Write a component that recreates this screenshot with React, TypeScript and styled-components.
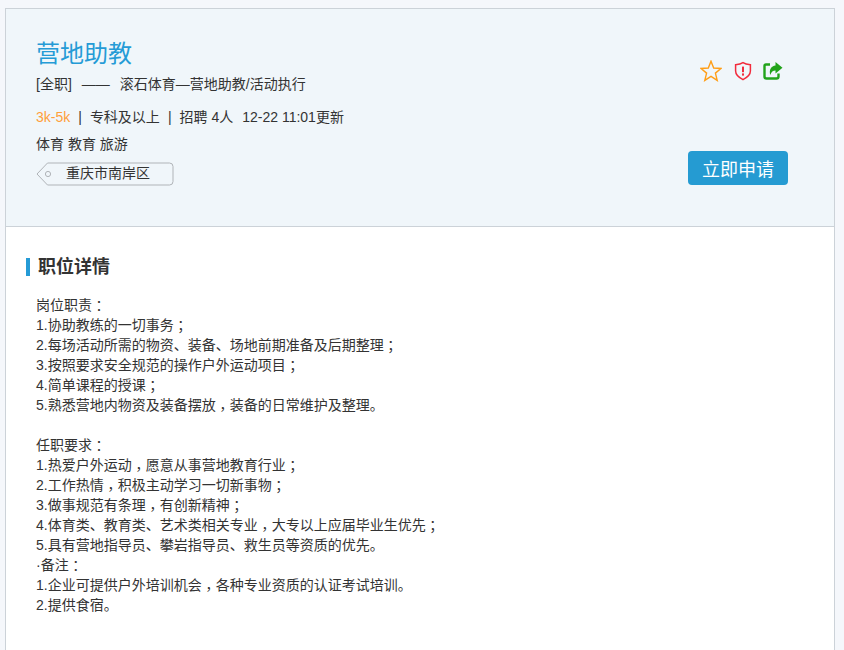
import React from 'react';
import styled, { createGlobalStyle } from 'styled-components';

const Global = createGlobalStyle`
  html, body { margin: 0; padding: 0; background: #f5f7fb; }
  body { font-family: "Liberation Sans", "Noto Sans CJK SC", sans-serif; font-size: 14px; color: #333; }
`;

const Page = styled.div`
  height: 650px;
  overflow: hidden;
  padding: 8px 9px 0 5px;
  box-sizing: border-box;
`;
const Card = styled.div`
  border: 1px solid #ccd2d8;
  border-bottom: none;
  background: #fff;
  height: 660px;
`;
const Header = styled.header`
  height: 217px;
  background: #f0f6fa;
  border-bottom: 1px solid #ccd2d8;
  display: flex;
  justify-content: space-between;
  padding: 0 46px 0 30px;
`;
const Info = styled.div`
  display: flex;
  flex-direction: column;
  padding-top: 28px;
`;
const Title = styled.h1`
  margin: 0;
  font-size: 24px;
  font-weight: 400;
  line-height: 34px;
  color: #259bd6;
`;
const Sub = styled.div`
  margin-top: 3px;
  line-height: 20px;
  white-space: pre;
`;
const Dash = styled.span`
  margin: 0 10px;
`;
const Meta = styled.div`
  margin-top: 13px;
  line-height: 20px;
  white-space: pre;
`;
const Salary = styled.span`
  color: #ff9f3a;
`;
const Divider = styled.span`
  margin: 0 8px;
`;
const Time = styled.span`
  margin-left: 9px;
`;
const Tags = styled.div`
  margin-top: 7px;
  line-height: 20px;
`;
const Location = styled.div`
  position: relative;
  margin-top: 8px;
  width: 138px;
  height: 24px;
  line-height: 22px;
  box-sizing: border-box;
  padding-left: 30px;
`;
const LocationShape = styled.svg`
  position: absolute;
  left: 0;
  top: 0;
`;
const LocationText = styled.span`
  position: relative;
`;
const Actions = styled.div`
  display: flex;
  flex-direction: column;
  align-items: flex-end;
  padding-top: 50px;
`;
const Icons = styled.div`
  display: flex;
  align-items: center;
  gap: 10px;
  margin-right: 5px;
  height: 24px;
`;
const StarIcon = styled.svg`
  margin-right: 1px;
`;
const ApplyButton = styled.button`
  margin-top: 68px;
  width: 100px;
  height: 34px;
  border: none;
  border-radius: 4px;
  background: #259bd2;
  color: #fff;
  font-family: inherit;
  font-size: 18px;
  padding: 0;
`;
const Body = styled.section`
  padding: 31px 30px 0 20px;
`;
const SectionTitle = styled.h2`
  margin: 0;
  border-left: 4px solid #259bd6;
  padding-left: 8px;
  height: 18px;
  font-size: 18px;
  font-weight: 700;
  line-height: 18px;
  color: #333;
`;
const Description = styled.div`
  margin-top: 19px;
  padding-left: 10px;
  line-height: 20px;
`;
const Line = styled.div`
  height: 20px;
  white-space: pre;
`;
const Punct = styled.span<{ $drop: number }>`
  font-family: "Noto Sans CJK TC", sans-serif;
  line-height: 0;
  vertical-align: ${(p) => -p.$drop}px;
`;

const lines = [
  '岗位职责：',
  '1.协助教练的一切事务；',
  '2.每场活动所需的物资、装备、场地前期准备及后期整理；',
  '3.按照要求安全规范的操作户外运动项目；',
  '4.简单课程的授课；',
  '5.熟悉营地内物资及装备摆放，装备的日常维护及整理。',
  '',
  '任职要求：',
  '1.热爱户外运动，愿意从事营地教育行业；',
  '2.工作热情，积极主动学习一切新事物；',
  '3.做事规范有条理，有创新精神；',
  '4.体育类、教育类、艺术类相关专业，大专以上应届毕业生优先；',
  '5.具有营地指导员、攀岩指导员、救生员等资质的优先。',
  '·备注：',
  '1.企业可提供户外培训机会，各种专业资质的认证考试培训。',
  '2.提供食宿。',
];

const renderLine = (text: string) =>
  text.split(/([，；：])/).map((part, i) =>
    i % 2 === 1 ? (
      <Punct key={i} $drop={part === '，' ? 4 : 1}>
        {part}
      </Punct>
    ) : (
      part
    ),
  );

export default function App() {
  return (
    <>
      <Global />
      <Page>
        <Card>
          <Header>
            <Info>
              <Title>营地助教</Title>
              <Sub>[全职]<Dash>——</Dash>滚石体育—营地助教/活动执行</Sub>
              <Meta>
                <Salary>3k-5k</Salary>
                <Divider>|</Divider>专科及以上<Divider>|</Divider>招聘 4人<Time>12-22 11:01更新</Time>
              </Meta>
              <Tags>体育 教育 旅游</Tags>
              <Location>
                <LocationShape width="138" height="24" viewBox="0 0 138 24">
                  <path d="M1 12 L11.5 1 H133.5 a3.5 3.5 0 0 1 3.5 3.5 V19.5 a3.5 3.5 0 0 1 -3.5 3.5 H11.5 Z" fill="none" stroke="#b0b4b8" strokeWidth="1" />
                  <circle cx="12" cy="12" r="2.6" fill="none" stroke="#b0b4b8" strokeWidth="1" />
                </LocationShape>
                <LocationText>重庆市南岸区</LocationText>
              </Location>
            </Info>
            <Actions>
              <Icons>
                <StarIcon width="22" height="22" viewBox="0 0 22 22">
                  <path d="M11 1.2 L13.7 8 L21 8.5 L15.4 13.1 L17.2 20.4 L11 16.4 L4.8 20.4 L6.6 13.1 L1 8.5 L8.3 8 Z" fill="none" stroke="#ff9e16" strokeWidth="1.4" strokeLinejoin="miter" />
                </StarIcon>
                <svg width="20" height="20" viewBox="0 0 20 20">
                  <path d="M10 1.6 C12 3 14.8 3.6 17.4 3.8 V10 C17.4 13.8 14 16.6 10 18.6 C6 16.6 2.6 13.8 2.6 10 V3.8 C5.2 3.6 8 3 10 1.6 Z" fill="none" stroke="#f22b3c" strokeWidth="1.5" />
                  <rect x="9" y="5.6" width="2" height="5.6" fill="#f22b3c" />
                  <rect x="9" y="12.4" width="2" height="2.2" fill="#f22b3c" />
                </svg>
                <svg width="20" height="20" viewBox="0 0 20 20">
                  <path d="M7 3.5 H3 a1.5 1.5 0 0 0 -1.5 1.5 V15.5 a2 2 0 0 0 2 2 H13.5 a2 2 0 0 0 2 -2 V12.5" fill="none" stroke="#22a31a" strokeWidth="2.4" />
                  <path d="M12.5 1 L19.5 6.8 L12.5 12.4 V9.4 C10 9.4 8.2 10.6 7.4 14 C5.6 8.6 8.4 4.8 12.5 4.4 Z" fill="#22a31a" />
                </svg>
              </Icons>
              <ApplyButton>立即申请</ApplyButton>
            </Actions>
          </Header>
          <Body>
            <SectionTitle>职位详情</SectionTitle>
            <Description>
              {lines.map((l, i) => (
                <Line key={i}>{renderLine(l)}</Line>
              ))}
            </Description>
          </Body>
        </Card>
      </Page>
    </>
  );
}
